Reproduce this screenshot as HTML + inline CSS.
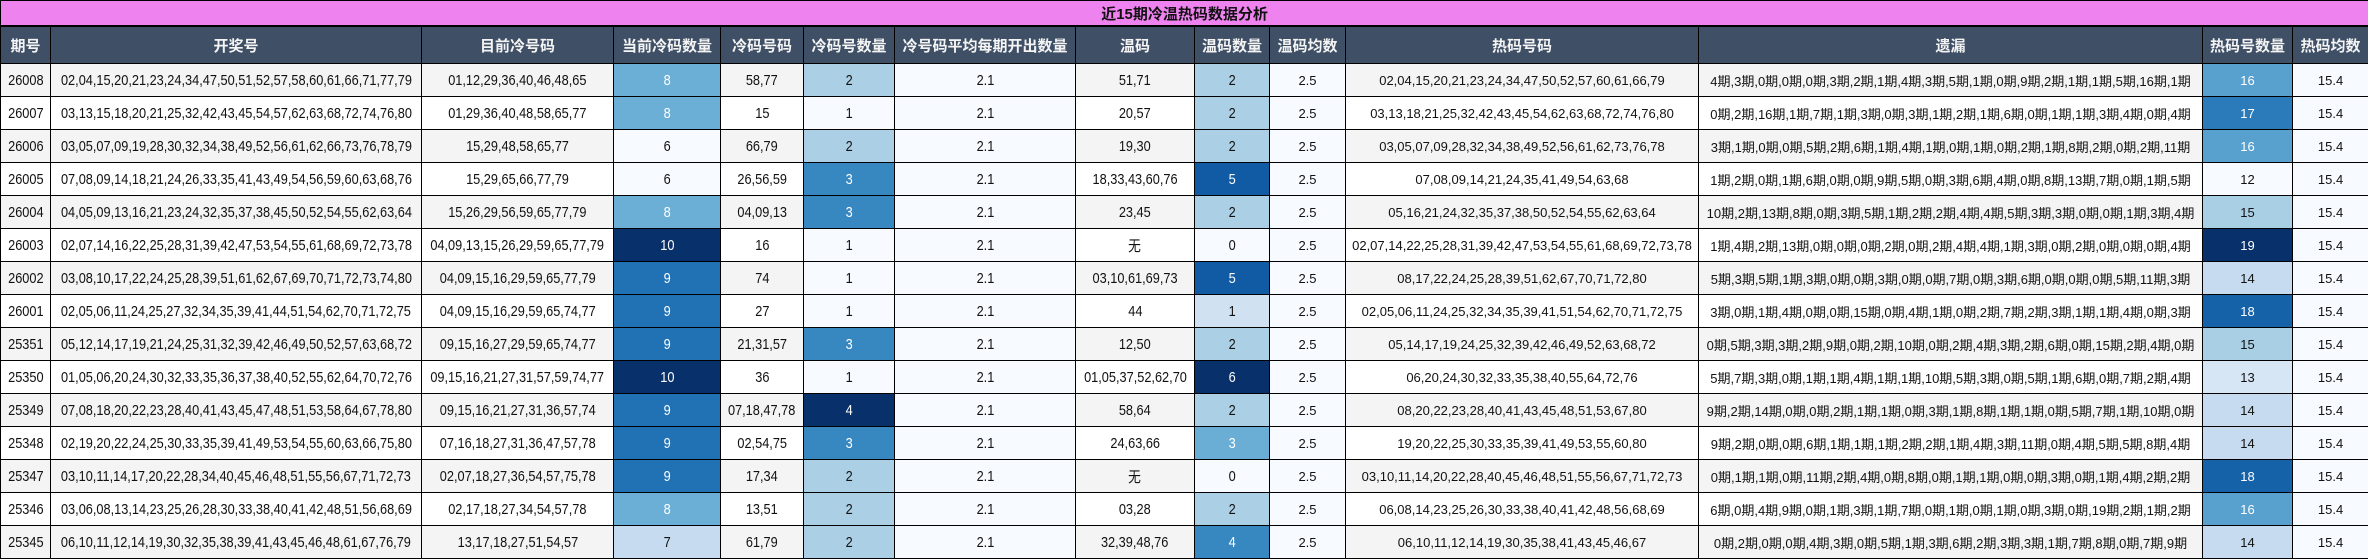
<!DOCTYPE html>
<html><head><meta charset="utf-8"><style>
html,body{margin:0;padding:0;background:#fff;}
body{width:2368px;height:559px;overflow:hidden;font-family:"Liberation Sans","Noto Sans CJK SC",sans-serif;}
table{border-collapse:collapse;table-layout:fixed;width:2368px;}
td,th{border:1px solid #000;padding:0;text-align:center;white-space:nowrap;overflow:hidden;font-size:13px;color:#111;}
.t td{height:24px;background:#ee82ee;border-bottom:2px solid #000;font-weight:bold;font-size:15px;}
th{height:36px;background:#3f5066;color:#f4f4f4;font-weight:bold;font-size:15px;font-family:"Liberation Sans","Noto Sans CJK SC",sans-serif;}
tbody tr td{height:32px;}
tr.g td{background:#f4f4f4;}
tr.w td{background:#fff;}
.c div{display:flex;justify-content:center;width:100%;}
.c span{display:inline-block;font-size:15px;transform:scaleX(.85);flex:none;}
tr td.p{background:#f7fbff;}
</style></head><body>
<table>
<colgroup><col style="width:50px"><col style="width:371px"><col style="width:192px"><col style="width:107px"><col style="width:83px"><col style="width:91px"><col style="width:181px"><col style="width:119px"><col style="width:75px"><col style="width:76px"><col style="width:353px"><col style="width:504px"><col style="width:90px"><col style="width:76px"></colgroup>
<tr class="t"><td colspan="14">近15期冷温热码数据分析</td></tr>
<tr><th>期号</th><th>开奖号</th><th>目前冷号码</th><th>当前冷码数量</th><th>冷码号码</th><th>冷码号数量</th><th>冷号码平均每期开出数量</th><th>温码</th><th>温码数量</th><th>温码均数</th><th>热码号码</th><th>遗漏</th><th>热码号数量</th><th>热码均数</th></tr>
<tbody id="b"></tbody>
</table>
<script>
var R=[
["26008","02,04,15,20,21,23,24,34,47,50,51,52,57,58,60,61,66,71,77,79","01,12,29,36,40,46,48,65",8,"58,77",2,"51,71",2,"02,04,15,20,21,23,24,34,47,50,52,57,60,61,66,79","4期,3期,0期,0期,0期,3期,2期,1期,4期,3期,5期,1期,0期,9期,2期,1期,1期,5期,16期,1期",16],
["26007","03,13,15,18,20,21,25,32,42,43,45,54,57,62,63,68,72,74,76,80","01,29,36,40,48,58,65,77",8,"15",1,"20,57",2,"03,13,18,21,25,32,42,43,45,54,62,63,68,72,74,76,80","0期,2期,16期,1期,7期,1期,3期,0期,3期,1期,2期,1期,6期,0期,1期,1期,3期,4期,0期,4期",17],
["26006","03,05,07,09,19,28,30,32,34,38,49,52,56,61,62,66,73,76,78,79","15,29,48,58,65,77",6,"66,79",2,"19,30",2,"03,05,07,09,28,32,34,38,49,52,56,61,62,73,76,78","3期,1期,0期,0期,5期,2期,6期,1期,4期,1期,0期,1期,0期,2期,1期,8期,2期,0期,2期,11期",16],
["26005","07,08,09,14,18,21,24,26,33,35,41,43,49,54,56,59,60,63,68,76","15,29,65,66,77,79",6,"26,56,59",3,"18,33,43,60,76",5,"07,08,09,14,21,24,35,41,49,54,63,68","1期,2期,0期,1期,6期,0期,0期,9期,5期,0期,3期,6期,4期,0期,8期,13期,7期,0期,1期,5期",12],
["26004","04,05,09,13,16,21,23,24,32,35,37,38,45,50,52,54,55,62,63,64","15,26,29,56,59,65,77,79",8,"04,09,13",3,"23,45",2,"05,16,21,24,32,35,37,38,50,52,54,55,62,63,64","10期,2期,13期,8期,0期,3期,5期,1期,2期,2期,4期,4期,5期,3期,3期,0期,0期,1期,3期,4期",15],
["26003","02,07,14,16,22,25,28,31,39,42,47,53,54,55,61,68,69,72,73,78","04,09,13,15,26,29,59,65,77,79",10,"16",1,"无",0,"02,07,14,22,25,28,31,39,42,47,53,54,55,61,68,69,72,73,78","1期,4期,2期,13期,0期,0期,0期,2期,0期,2期,4期,4期,1期,3期,0期,2期,0期,0期,0期,4期",19],
["26002","03,08,10,17,22,24,25,28,39,51,61,62,67,69,70,71,72,73,74,80","04,09,15,16,29,59,65,77,79",9,"74",1,"03,10,61,69,73",5,"08,17,22,24,25,28,39,51,62,67,70,71,72,80","5期,3期,5期,1期,3期,0期,0期,3期,0期,0期,7期,0期,3期,6期,0期,0期,0期,5期,11期,3期",14],
["26001","02,05,06,11,24,25,27,32,34,35,39,41,44,51,54,62,70,71,72,75","04,09,15,16,29,59,65,74,77",9,"27",1,"44",1,"02,05,06,11,24,25,32,34,35,39,41,51,54,62,70,71,72,75","3期,0期,1期,4期,0期,0期,15期,0期,4期,1期,0期,2期,7期,2期,3期,1期,1期,4期,0期,3期",18],
["25351","05,12,14,17,19,21,24,25,31,32,39,42,46,49,50,52,57,63,68,72","09,15,16,27,29,59,65,74,77",9,"21,31,57",3,"12,50",2,"05,14,17,19,24,25,32,39,42,46,49,52,63,68,72","0期,5期,3期,3期,2期,9期,0期,2期,10期,0期,2期,4期,3期,2期,6期,0期,15期,2期,4期,0期",15],
["25350","01,05,06,20,24,30,32,33,35,36,37,38,40,52,55,62,64,70,72,76","09,15,16,21,27,31,57,59,74,77",10,"36",1,"01,05,37,52,62,70",6,"06,20,24,30,32,33,35,38,40,55,64,72,76","5期,7期,3期,0期,1期,1期,4期,1期,1期,10期,5期,3期,0期,5期,1期,6期,0期,7期,2期,4期",13],
["25349","07,08,18,20,22,23,28,40,41,43,45,47,48,51,53,58,64,67,78,80","09,15,16,21,27,31,36,57,74",9,"07,18,47,78",4,"58,64",2,"08,20,22,23,28,40,41,43,45,48,51,53,67,80","9期,2期,14期,0期,0期,2期,1期,1期,0期,3期,1期,8期,1期,1期,0期,5期,7期,1期,10期,0期",14],
["25348","02,19,20,22,24,25,30,33,35,39,41,49,53,54,55,60,63,66,75,80","07,16,18,27,31,36,47,57,78",9,"02,54,75",3,"24,63,66",3,"19,20,22,25,30,33,35,39,41,49,53,55,60,80","9期,2期,0期,0期,6期,1期,1期,1期,2期,2期,1期,4期,3期,11期,0期,4期,5期,5期,8期,4期",14],
["25347","03,10,11,14,17,20,22,28,34,40,45,46,48,51,55,56,67,71,72,73","02,07,18,27,36,54,57,75,78",9,"17,34",2,"无",0,"03,10,11,14,20,22,28,40,45,46,48,51,55,56,67,71,72,73","0期,1期,1期,0期,11期,2期,4期,0期,8期,0期,1期,1期,0期,0期,3期,0期,1期,4期,2期,2期",18],
["25346","03,06,08,13,14,23,25,26,28,30,33,38,40,41,42,48,51,56,68,69","02,17,18,27,34,54,57,78",8,"13,51",2,"03,28",2,"06,08,14,23,25,26,30,33,38,40,41,42,48,56,68,69","6期,0期,4期,9期,0期,1期,3期,1期,7期,0期,1期,0期,1期,0期,3期,0期,19期,2期,1期,2期",16],
["25345","06,10,11,12,14,19,30,32,35,38,39,41,43,45,46,48,61,67,76,79","13,17,18,27,51,54,57",7,"61,79",2,"32,39,48,76",4,"06,10,11,12,14,19,30,35,38,41,43,45,46,67","0期,2期,0期,0期,4期,3期,0期,5期,1期,3期,6期,2期,3期,3期,1期,7期,8期,0期,7期,9期",14]];
var CC={6:"#f7fbff",7:"#c6dbef",8:"#6baed6",9:"#2171b5",10:"#08306b"};
var NC={1:"#f7fbff",2:"#abd0e6",3:"#3787c0",4:"#08306b"};
var WC={0:"#f7fbff",1:"#d0e1f2",2:"#abd0e6",3:"#6aaed6",4:"#3787c0",5:"#105ba4",6:"#08306b"};
var HC={12:"#f7fbff",13:"#d6e6f4",14:"#c6dbef",15:"#a9cfe5",16:"#58a1cf",17:"#2b7bba",18:"#1562a9",19:"#08306b"};
function c(v){return '<td class="c"><div><span>'+v+'</span></div></td>';}
function cell(v,bg,light,cls){return '<td class="'+cls+'" style="background:'+bg+';color:'+(light?'#fff':'#111')+'">'+(cls?'<div><span>'+v+'</span></div>':v)+'</td>';}
var h="";
R.forEach(function(r,i){
h+='<tr class="'+(i%2?'w':'g')+'">';
h+=c(r[0])+c(r[1])+c(r[2]);
h+=cell(r[3],CC[r[3]],r[3]>=8,'c');
h+=c(r[4]);
h+=cell(r[5],NC[r[5]],r[5]>=3,'c');
h+='<td class="c p"><div><span>2.1</span></div></td>';
h+=c(r[6]);
h+=cell(r[7],WC[r[7]],r[7]>=3,'c');
h+='<td class="p">2.5</td>';
h+='<td>'+r[8]+'</td><td>'+r[9]+'</td>';
h+=cell(r[10],HC[r[10]],r[10]>=16,'');
h+='<td class="p">15.4</td></tr>';
});
document.getElementById("b").innerHTML=h;
</script>
</body></html>
